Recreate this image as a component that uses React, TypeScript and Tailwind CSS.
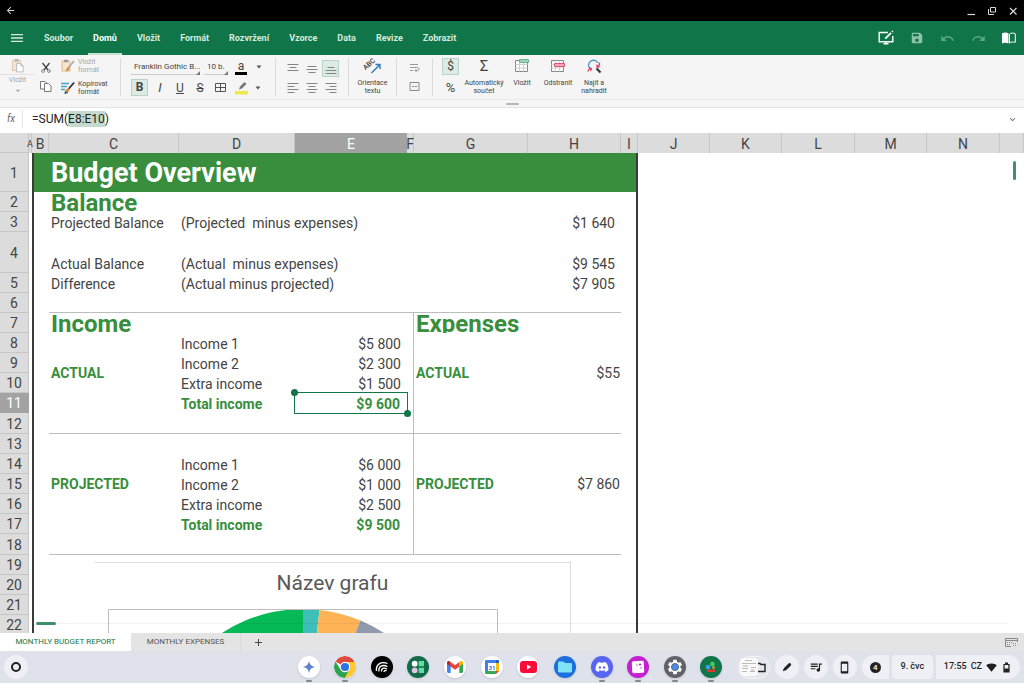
import { useEffect, useRef } from 'react'
import type { ReactNode } from 'react'
import { FaDiscord } from 'react-icons/fa'
import {
  MdArrowBack,
  MdArrowDropDown,
  MdBatteryFull,
  MdColorize,
  MdKeyboardArrowDown,
  MdMenu,
  MdQueueMusic,
  MdRedo,
  MdSave,
  MdSettings,
  MdSignalWifi4Bar,
  MdStayPrimaryPortrait,
  MdUndo,
} from 'react-icons/md'

const menu = ['Soubor', 'Domů', 'Vložit', 'Formát', 'Rozvržení', 'Vzorce', 'Data', 'Revize', 'Zobrazit']

const columns = [
  { name: 'A', col: 'w-[3px]' },
  { name: 'B', col: 'w-[17px]' },
  { name: 'C', col: 'w-[130px]' },
  { name: 'D', col: 'w-[116px]' },
  { name: 'E', col: 'w-[112px]' },
  { name: 'F', col: 'w-[7px]' },
  { name: 'G', col: 'w-[114px]' },
  { name: 'H', col: 'w-[93px]' },
  { name: 'I', col: 'w-[17px]' },
  { name: 'J', col: 'w-[72px]' },
  { name: 'K', col: 'w-[72px]' },
  { name: 'L', col: 'w-[73px]' },
  { name: 'M', col: 'w-[72px]' },
  { name: 'N', col: 'w-[73px]' },
  { name: '', col: '' },
]

function TitleBar() {
  return (
    <div className="flex h-[21px] shrink-0 items-center justify-between bg-black pr-[6px] pl-1 text-[#d8d8d8]">
      <button aria-label="Zpět" className="flex w-3 justify-center">
        <MdArrowBack size={11} />
      </button>
      <div className="flex items-center gap-[11px]">
        <button aria-label="Minimalizovat">
          <svg width="10" height="10" viewBox="0 0 10 10" stroke="currentColor" strokeWidth="1.2">
            <path d="M1.5 8.5h7.5" />
          </svg>
        </button>
        <button aria-label="Obnovit">
          <svg width="10" height="10" viewBox="0 0 10 10" fill="none" stroke="currentColor">
            <path d="M3.5 1.5h5v4.500h-5zM1.500 3v5.500h5.500" />
          </svg>
        </button>
        <button aria-label="Zavřít">
          <svg width="10" height="10" viewBox="0 0 10 10" stroke="currentColor" strokeWidth="1.2">
            <path d="M2 2l6.500 6.500M8.500 2L2 8.500" />
          </svg>
        </button>
      </div>
    </div>
  )
}

function MenuBar() {
  return (
    <header className="flex h-[34px] shrink-0 items-stretch bg-[#107549] text-[#d5eadf]">
      <button aria-label="Nabídka" className="flex w-[34px] items-center justify-center">
        <MdMenu size={16} />
      </button>
      <nav className="flex items-stretch pt-[2px]">
        {menu.map((item) => (
          <a
            key={item}
            href="#"
            className={
              item === 'Domů'
                ? 'mx-[5px] flex items-center border-b-2 border-[#c9e2d5] px-[5px] pt-[2px] text-[9px] font-bold text-white'
                : 'flex items-center px-[10px] text-[9px] font-bold'
            }
          >
            {item}
          </a>
        ))}
      </nav>
      <div className="ml-auto flex items-center gap-4 pr-2">
        <button aria-label="Režim úprav" className="text-white">
          <svg width="16" height="16" viewBox="0 0 16 16" fill="none" stroke="currentColor" strokeWidth="1.4">
            <path d="M10 2.500H1.200v9.200h13.600V6M5.500 13.800h5M8 12v2" />
            <path d="M7.300 8.700L13 2.800" strokeWidth="1.800" />
            <path d="M14 1.800l.8-.8" strokeWidth="1.800" />
          </svg>
        </button>
        <button aria-label="Uložit" className="text-[#8ec3a9]">
          <MdSave size={14} />
        </button>
        <button aria-label="Zpět" className="text-[#5ba582]">
          <MdUndo size={15} />
        </button>
        <button aria-label="Znovu" className="text-[#5ba582]">
          <MdRedo size={15} />
        </button>
        <button aria-label="Čtení" className="text-white">
          <svg width="14" height="14" viewBox="0 0 14 14">
            <path d="M0 2.500C2 1.200 5 1.300 6.500 2.600V12.600C5 11.400 2 11.300 0 12.400z" fill="currentColor" />
            <path d="M7.500 3c1.500-1.200 3.800-1.200 5.800-.3v8.600c-2-.6-4.300-.5-5.800.7z" fill="none" stroke="currentColor" />
          </svg>
        </button>
      </div>
    </header>
  )
}

function PasteIcon() {
  return (
    <svg width="14" height="16" viewBox="0 0 14 16" fill="none">
      <path d="M1 2.500h9v11H1z" fill="#f3e3cf" stroke="#dcc7ae" />
      <path d="M3.500 1h4v3h-4z" fill="#b5b5b5" />
      <path d="M5.500 6h4.500l2.500 2.500V15h-7z" fill="#fff" stroke="#b5b5b5" />
      <path d="M10 6v2.500h2.500" stroke="#b5b5b5" />
    </svg>
  )
}

function PasteFormatIcon() {
  return (
    <svg width="14" height="14" viewBox="0 0 14 14" fill="none">
      <path d="M1 2h8v10H1z" fill="#f6e4cd" stroke="#dfb98a" />
      <path d="M3 .7h4v2.600H3z" fill="#999" />
      <path d="M13 2L7.500 8.500" stroke="#aaa" strokeWidth="1.600" />
      <path d="M7.500 8c1.500.5 1.500 3.500-2.500 4.500 0-2 .5-4 2.500-4.500z" fill="#c88f54" />
    </svg>
  )
}

function CopyFormatIcon() {
  return (
    <svg width="14" height="14" viewBox="0 0 14 14" fill="none">
      <path d="M0 2.500h8M0 5.500h6M0 8.500h4" stroke="#4aa3c7" strokeWidth="1.400" />
      <path d="M13.200 1.500L7.500 8" stroke="#333" strokeWidth="1.800" />
      <path d="M7 7.300c2 .5 2.200 4-3.500 5.700.3-3 1-5.200 3.500-5.700z" fill="#e38b36" />
      <path d="M4 10.500c1.500 0 2.500.5 3 1.200-1 .8-2 1.100-3.500 1.300z" fill="#1d5f96" />
    </svg>
  )
}

function Lines({ d }: { d: string }) {
  return (
    <svg width="12" height="12" viewBox="0 0 12 12" stroke="#858585" fill="none">
      <path d={d} />
    </svg>
  )
}

function BorderIcon() {
  return (
    <svg width="11" height="11" viewBox="0 0 11 11" fill="none" stroke="#555">
      <path d="M.5 1.500h10v8H.5zM5.500 1.500v8M.5 5.500h10" />
    </svg>
  )
}

function Caret() {
  return (
    <svg width="6" height="12" viewBox="0 0 6 12">
      <path d="M.5 4.500h5L3 7.500z" fill="#555" />
    </svg>
  )
}

// small triangle in the lower right corner of the font pickers
function Corner() {
  return (
    <svg width="4" height="4" viewBox="0 0 4 4" className="pointer-events-none absolute right-0 bottom-0">
      <path d="M4 0v4H0z" fill="#777" />
    </svg>
  )
}

function TableIcon({ remove }: { remove?: boolean }) {
  return (
    <svg width="16" height="16" viewBox="0 0 16 16" fill="none">
      <path d="M1.500 2.500h12v11h-12z" fill="#fff" stroke="#858585" />
      <path d="M1.500 6.500h12M1.500 10h12M5.500 2.500v11M9.500 2.500v11" stroke="#d0d0d0" />
      {remove ? (
        <path d="M4.500 5.500h10v3h-10z" fill="#f7a8b8" stroke="#df5674" strokeLinejoin="round" />
      ) : (
        <path d="M5.500 1.500h9v3h-9z" fill="#9ad2b8" stroke="#6db794" strokeLinejoin="round" />
      )}
    </svg>
  )
}

function ToolButton({ label, icon, width }: { label: string; icon: ReactNode; width: string }) {
  return (
    <button className={`flex ${width} flex-col items-center gap-[5px] text-[7px] leading-2 text-[#444]`}>
      <span className="flex h-4 items-center">{icon}</span>
      <span className="text-center whitespace-pre-line">{label}</span>
    </button>
  )
}

function Ribbon() {
  return (
    <div className="shrink-0 bg-[#f5f5f5]">
      <div className="flex h-11 items-center text-[#444]">
        <div className="flex h-[38px] border-r border-[#dcdcdc] pr-3">
          <button className="flex w-[35px] flex-col items-center text-[7px] text-[#a5a5a5]">
            <PasteIcon />
            <span className="mt-px w-full border-t border-[#e2e2e2] leading-[10px]">Vložit</span>
            <MdArrowDropDown size={12} />
          </button>
          <div className="flex w-[22px] flex-col items-center justify-between py-1">
            <button aria-label="Vyjmout">
              <svg width="10" height="11" viewBox="0 0 10 11" fill="none" stroke="#444">
                <path d="M1.500 1l5.500 7M8.500 1L3 8" strokeWidth="1.300" />
                <circle cx="2" cy="9" r="1.400" stroke="#888" />
                <circle cx="8" cy="9" r="1.400" stroke="#888" />
              </svg>
            </button>
            <button aria-label="Kopírovat">
              <svg width="12" height="12" viewBox="0 0 12 12" fill="#fff" stroke="#777">
                <path d="M.5 1.500H5L7 3.500V9H.5z" />
                <path d="M4.500 3.500h4l2.500 2.500v5.500H4.500z" />
              </svg>
            </button>
          </div>
          <div className="flex flex-col justify-between pl-1">
            <button className="flex items-center gap-[3px] text-left text-[7px] leading-2 text-[#a5a5a5]">
              <PasteFormatIcon />
              <span>Vložit<br />formát</span>
            </button>
            <button className="flex items-center gap-[3px] text-left text-[7px] leading-2">
              <CopyFormatIcon />
              <span className="w-[30px]">Kopírovat<br />formát</span>
            </button>
          </div>
        </div>

        <div className="flex h-[38px] w-[155px] flex-col justify-between border-r border-[#dcdcdc] pl-[10px]">
          <div className="flex h-[17px] items-end">
            <div className="relative flex w-[69px]">
              <select
                aria-label="Písmo"
                className="h-4 w-full appearance-none border-b border-[#ccc] pl-[3px] text-[8px] outline-none"
              >
                <option>Franklin Gothic B...</option>
              </select>
              <Corner />
            </div>
            <div className="relative ml-1 flex w-6">
              <select
                aria-label="Velikost písma"
                className="h-4 w-full appearance-none border-b border-[#ccc] pl-[3px] text-[8px] outline-none"
              >
                <option>10 b.</option>
              </select>
              <Corner />
            </div>
            <button aria-label="Barva písma" className="ml-[7px] flex w-3 flex-col items-center">
              <span className="text-[12px] leading-3">a</span>
              <span className="h-[3px] w-3 bg-black" />
            </button>
            <button aria-label="Další barvy písma" className="mb-[2px] ml-[9px]">
              <Caret />
            </button>
          </div>
          <div className="flex items-center">
            <button
              aria-pressed="true"
              className="h-[17px] w-[17px] border border-[#b9d3c6] bg-[#dcebe4] text-[12px] leading-[15px] font-bold"
            >
              B
            </button>
            <button className="ml-[2px] w-5 text-[13px] leading-4 italic">I</button>
            <button className="w-5 text-[12px] leading-4 underline">U</button>
            <button className="w-5 text-[12px] leading-4 line-through">S</button>
            <button aria-label="Ohraničení" className="flex w-5 justify-center">
              <BorderIcon />
            </button>
            <button aria-label="Barva výplně" className="flex w-[22px] justify-center">
              <svg width="13" height="14" viewBox="0 0 13 14">
                <path d="M4 8.500l1-3L9.500 1l2 2L7 7.500z" fill="#777" />
                <path d="M0 10h13v3.500H0z" fill="#f0e94b" />
              </svg>
            </button>
            <button aria-label="Další barvy výplně" className="ml-[3px]">
              <Caret />
            </button>
          </div>
        </div>

        <div className="grid h-[38px] w-[73px] grid-cols-3 place-items-center border-r border-[#dcdcdc] px-2">
          <button aria-label="Nahoru"><Lines d="M.5 1.500h11M2.500 4.500h7M.5 7.500h11" /></button>
          <button aria-label="Na střed svisle"><Lines d="M1.500 3.500h9M.5 6.500h11M2.500 9.500h7" /></button>
          <button
            aria-label="Dolů"
            aria-pressed="true"
            className="flex h-[17px] w-[17px] items-center justify-center border border-[#b9d3c6] bg-[#dcebe4]"
          >
            <Lines d="M2.500 4.500h7M.5 7.500h11M.5 10.500h11" />
          </button>
          <button aria-label="Vlevo"><Lines d="M.5 1.500h11M.5 4.500h7M.5 7.500h11M.5 10.500h7" /></button>
          <button aria-label="Na střed"><Lines d="M.5 1.500h11M2.500 4.500h7M.5 7.500h11M2.500 10.500h7" /></button>
          <button aria-label="Vpravo"><Lines d="M.5 1.500h11M4.500 4.500h7M.5 7.500h11M4.500 10.500h7" /></button>
        </div>

        <div className="flex h-[38px] w-12 justify-center border-r border-[#dcdcdc]">
          <ToolButton
            width="w-12"
            label={'Orientace\ntextu'}
            icon={
              <svg width="20" height="18" viewBox="0 0 20 18" fill="none" className="overflow-visible">
                <text x="2" y="12" fontSize="7" fontWeight="500" fill="#333" transform="rotate(-42 4 12)">
                  ABC
                </text>
                <path d="M8.500 16l8-8M12.500 7.500h4.500V12" stroke="#2b7bb5" strokeWidth="1.400" />
              </svg>
            }
          />
        </div>

        <div className="flex h-[38px] w-9 flex-col items-center justify-around border-r border-[#dcdcdc]">
          <button aria-label="Zalamovat text">
            <svg width="11" height="11" viewBox="0 0 11 11" fill="none" stroke="#999">
              <path d="M1 2.500h8M1 5.500h7.500c2 0 2 3 0 3H6M1 8.500h3M7.500 7L6 8.500 7.500 10" />
            </svg>
          </button>
          <button aria-label="Sloučit buňky">
            <svg width="11" height="11" viewBox="0 0 11 11" fill="none" stroke="#8a8a8a">
              <path d="M1 1.500h9v8H1z" />
              <path d="M3 5.500h2M6 5.500h2" stroke="#4b9f86" />
            </svg>
          </button>
        </div>

        <div className="flex h-[38px] w-[31px] flex-col items-center justify-between pl-1">
          <button
            aria-pressed="true"
            className="h-[17px] w-[17px] border border-[#b9d3c6] bg-[#dcebe4] text-[12px] leading-[15px]"
          >
            $
          </button>
          <button className="text-[13px] leading-[17px]">%</button>
        </div>

        <div className="flex h-[38px]">
          <ToolButton width="w-10" label={'Automatický\nsoučet'} icon={<span className="text-[15px] leading-4">Σ</span>} />
          <ToolButton width="w-9" label="Vložit" icon={<TableIcon />} />
          <ToolButton width="w-9" label="Odstranit" icon={<TableIcon remove />} />
          <ToolButton
            width="w-9"
            label={'Najít a\nnahradit'}
            icon={
              <svg width="16" height="16" viewBox="0 0 16 16" fill="none">
                <path d="M10.500 10.500l4 4" stroke="#333" strokeWidth="2.200" />
                <path d="M4 10.800A5 5 0 1 1 12 5" stroke="#4b97c9" strokeWidth="1.300" />
                <path d="M13.500 4.500c.3 2-.5 3.500-2 4M11 6.500v2.500h2.500" stroke="#d9436b" strokeWidth="1.300" />
                <path d="M2 13.500c0-1.500 1.500-3 3-3M3 9.500l2.500 1L4.500 13" stroke="#d9436b" strokeWidth="1.300" />
              </svg>
            }
          />
        </div>
      </div>
      <div className="flex h-2 items-center justify-center border-t border-[#e9e9e9]">
        <span className="h-[2px] w-[13px] rounded bg-[#b5b5b5]" />
      </div>
    </div>
  )
}

function FormulaBar() {
  const input = useRef<HTMLInputElement>(null)

  // keep the referenced range highlighted in the formula
  useEffect(() => {
    input.current?.focus({ preventScroll: true })
    input.current?.setSelectionRange(5, 11)
  }, [])

  return (
    <div className="flex h-[26px] shrink-0 items-center border-t border-[#e4e4e4] bg-white pb-[3px]">
      <label
        htmlFor="formula"
        className="h-[18px] w-[23px] border-r border-[#e6e6e6] text-center text-[10px] leading-[18px] italic text-[#666]"
      >
        fx
      </label>
      <input
        id="formula"
        ref={input}
        defaultValue="=SUM(E8:E10)"
        className="min-w-0 flex-1 pl-[9px] text-[12px] leading-4 text-[#222] outline-none selection:bg-[#c3dacd] selection:text-[#222]"
      />
      <button aria-label="Rozbalit" className="pr-[6px] text-[#666]">
        <MdKeyboardArrowDown size={11} />
      </button>
    </div>
  )
}

type RowProps = {
  n: number
  height?: string
  banner?: boolean
  children: ReactNode
}

function Row({ n, height = 'h-5', banner, children }: RowProps) {
  const fill = banner ? 'bg-[#388e3c]' : ''
  return (
    <tr className={height}>
      <th
        scope="row"
        className={
          n === 11
            ? 'border-r border-b border-[#a3a3a3] bg-[#a3a3a3] pt-px font-normal text-white'
            : 'border-r border-b border-[#c6c6c6] bg-[#dcdcdc] pt-px font-normal text-[#444]'
        }
      >
        {n}
      </th>
      <td />
      <td className={`border-l-2 border-[#3a3a3a] ${fill}`} />
      {children}
      <td className={`border-r-2 border-[#3a3a3a] ${fill}`} />
      <td colSpan={6} />
    </tr>
  )
}

function Heading({ children }: { children: ReactNode }) {
  return (
    <h2 className="h-5 pt-px pl-[2px] text-[24px] leading-5 font-bold whitespace-nowrap text-[#388e3c]">
      {children}
    </h2>
  )
}

const label = 'pt-[2px] pl-[2px]'
const amount = 'pt-[2px] pr-[6px] text-right'
const side = 'pl-[2px] align-middle font-bold text-[#388e3c]'
const bar = <td className="border-r border-[#bdbdbd]" />

type BalanceProps = { n: number; height?: string; title: string; note: string; value: string }

function BalanceRow({ n, height, title, note, value }: BalanceProps) {
  return (
    <Row n={n} height={height}>
      <td className="pl-[2px] align-bottom whitespace-nowrap">{title}</td>
      <td colSpan={2} className="pl-[2px] align-bottom whitespace-pre">{note}</td>
      <td />
      <td />
      <td className="pr-[6px] text-right align-bottom">{value}</td>
    </Row>
  )
}

function RuledRow({ n, height, split }: { n: number; height?: string; split?: boolean }) {
  return (
    <Row n={n} height={height}>
      <td colSpan={3} className="border-b border-[#bdbdbd]" />
      <td className={split ? 'border-r border-b border-[#bdbdbd]' : 'border-b border-[#bdbdbd]'} />
      <td colSpan={2} className="border-b border-[#bdbdbd]" />
    </Row>
  )
}

function Chart() {
  return (
    <figure className="absolute top-[429px] left-[95px] h-[340px] w-[476px] border-t border-r border-[#dcdcdc] bg-white">
      <figcaption className="pt-2 text-center text-[21px] leading-6 text-[#595959]">Název grafu</figcaption>
      <svg className="mt-[14px] ml-[13px]" width="390" height="292" viewBox="0 0 390 292" fill="none">
        <path d="M195 149V0A149 149 0 0 0 46 149z" fill="#06b957" />
        <path d="M195 149V0A149 149 0 0 1 211.500 1z" fill="#3fbfb9" />
        <path d="M195 149L211.500 1A149 149 0 0 1 252.500 11.600z" fill="#feb357" />
        <path d="M195 149L252.500 11.600A149 149 0 0 1 344 149z" fill="#9199ab" />
        <path d="M.5 292V.5h389V292" stroke="#bdbdbd" />
      </svg>
    </figure>
  )
}

function Sheet() {
  return (
    <main className="relative min-h-0 flex-1 overflow-hidden bg-white">
      <table className="w-full table-fixed border-separate border-spacing-0 text-[14px] leading-[18px] text-[#444]">
        <colgroup>
          <col className="w-[29px]" />
          {columns.map((c, i) => (
            <col key={i} className={c.col} />
          ))}
        </colgroup>
        <thead>
          <tr className="h-5">
            <th className="border-r border-b border-[#c6c6c6] bg-[#dcdcdc]" />
            {columns.map((c, i) => (
              <th
                key={i}
                scope="col"
                className={
                  c.name === 'E'
                    ? 'bg-[#a3a3a3] pt-px font-normal text-white'
                    : 'border-r border-[#c6c6c6] bg-[#dcdcdc] pt-px font-normal'
                }
              >
                <span className={c.name === 'A' ? 'flex justify-center text-[9px]' : 'flex justify-center'}>{c.name}</span>
              </th>
            ))}
          </tr>
        </thead>
        <tbody>
          <Row n={1} height="h-[39px]" banner>
            <td colSpan={6} className="bg-[#388e3c] pl-[2px]">
              <h1 className="text-[27px] leading-8 font-bold text-white">Budget Overview</h1>
            </td>
          </Row>
          <Row n={2}>
            <td colSpan={6}><Heading>Balance</Heading></td>
          </Row>
          <BalanceRow n={3} title="Projected Balance" note="(Projected  minus expenses)" value="$1 640" />
          <BalanceRow n={4} height="h-[41px]" title="Actual Balance" note="(Actual  minus expenses)" value="$9 545" />
          <BalanceRow n={5} title="Difference" note="(Actual minus projected)" value="$7 905" />
          <RuledRow n={6} />
          <Row n={7}>
            <td colSpan={3}><Heading>Income</Heading></td>
            {bar}
            <td colSpan={2}>
              <div className="overflow-hidden"><Heading>Expenses</Heading></div>
            </td>
          </Row>
          <Row n={8}>
            <td rowSpan={4} className={side}>ACTUAL</td>
            <td className={label}>Income 1</td>
            <td className={amount}>$5 800</td>
            {bar}
            <td rowSpan={4} className={side}>ACTUAL</td>
            <td rowSpan={4} className="pr-px text-right align-middle">$55</td>
          </Row>
          <Row n={9}>
            <td className={label}>Income 2</td>
            <td className={amount}>$2 300</td>
            {bar}
          </Row>
          <Row n={10}>
            <td className={label}>Extra income</td>
            <td className={amount}>$1 500</td>
            {bar}
          </Row>
          <Row n={11}>
            <td className={`${label} font-bold text-[#388e3c]`}>Total income</td>
            <td className="relative pt-[2px] pr-[7px] text-right font-bold text-[#388e3c]">
              $9 600
              <span className="absolute -inset-px border border-[#107549]">
                <span className="absolute -top-1 -left-1 size-[7px] rounded-full bg-[#107549]" />
                <span className="absolute -right-1 -bottom-1 size-[7px] rounded-full bg-[#107549]" />
              </span>
            </td>
            {bar}
          </Row>
          <RuledRow n={12} height="h-[21px]" split />
          <Row n={13}>
            <td colSpan={3} />
            {bar}
            <td colSpan={2} />
          </Row>
          <Row n={14}>
            <td rowSpan={3} className={side}>PROJECTED</td>
            <td className={label}>Income 1</td>
            <td className={amount}>$6 000</td>
            {bar}
            <td rowSpan={3} className={side}>PROJECTED</td>
            <td rowSpan={3} className="pr-px text-right align-middle">$7 860</td>
          </Row>
          <Row n={15}>
            <td className={label}>Income 2</td>
            <td className={amount}>$1 000</td>
            {bar}
          </Row>
          <Row n={16}>
            <td className={label}>Extra income</td>
            <td className={amount}>$2 500</td>
            {bar}
          </Row>
          <Row n={17}>
            <td />
            <td className={`${label} font-bold text-[#388e3c]`}>Total income</td>
            <td className="pt-[2px] pr-[7px] text-right font-bold text-[#388e3c]">$9 500</td>
            {bar}
            <td colSpan={2} />
          </Row>
          <RuledRow n={18} height="h-[21px]" split />
          {[19, 20, 21, 22].map((n) => (
            <Row key={n} n={n}>
              <td colSpan={6} />
            </Row>
          ))}
        </tbody>
      </table>
      <Chart />
      <div className="absolute right-4 bottom-2 left-9 flex h-[3px] items-center">
        <span className="h-[3px] w-5 rounded bg-[#3f8e6c]" />
        <span className="h-px flex-1 bg-black/5" />
      </div>
      <div className="absolute top-7 right-2 h-[19px] w-[3px] rounded bg-[#3f8e6c]" />
    </main>
  )
}

function SheetTabs() {
  return (
    <div className="flex h-[18px] shrink-0 items-stretch bg-[#e4e4e4] text-[8px] text-[#555]">
      <button className="w-[131px] bg-white text-[#107549]">MONTHLY BUDGET REPORT</button>
      <button className="w-[110px] border-r border-[#dadada]">MONTHLY EXPENSES</button>
      <button aria-label="Přidat list" className="flex w-[35px] items-center justify-center">
        <svg width="9" height="9" viewBox="0 0 9 9" stroke="#444">
          <path d="M4.500 1v7M1 4.500h7" />
        </svg>
      </button>
      <button aria-label="Klávesnice" className="ml-auto pr-[6px]">
        <svg width="13" height="10" viewBox="0 0 13 10" fill="none" stroke="#888">
          <path d="M6 9.500H.5V1.500h12V5M.5 3.500h12" />
          <path d="M2 5.500h5M2 7.500h4M8 6.500h4M8 8.500h4" strokeDasharray="1 1" />
        </svg>
      </button>
    </div>
  )
}

const apps = [
  {
    name: 'Gemini',
    face: 'bg-white',
    open: true,
    icon: (
      <svg width="14" height="14" viewBox="0 0 14 14">
        <defs>
          <linearGradient id="spark" x1="0" y1="0" x2="1" y2="1">
            <stop offset="0" stopColor="#7b6fc0" />
            <stop offset="1" stopColor="#3d94dc" />
          </linearGradient>
        </defs>
        <path d="M7 1c.6 3.600 2.400 5.400 6 6-3.600.6-5.400 2.400-6 6-.6-3.600-2.400-5.400-6-6 3.600-.6 5.400-2.400 6-6z" fill="url(#spark)" />
      </svg>
    ),
  },
  {
    name: 'Chrome',
    face: 'bg-white',
    open: true,
    icon: (
      <svg width="22" height="22" viewBox="0 0 22 22">
        <path d="M11 11L1.470 5.500A11 11 0 0 1 20.530 5.500z" fill="#e04a3c" />
        <path d="M11 11V6h9.800A11 11 0 0 1 10.500 22z" fill="#fbc832" />
        <path d="M1.470 5.500A11 11 0 0 0 10.700 22L15.300 13.500 6.600 13.500z" fill="#2ea24f" />
        <circle cx="11" cy="11" r="5.200" fill="#fff" />
        <circle cx="11" cy="11" r="4.100" fill="#2b74e2" />
      </svg>
    ),
  },
  {
    name: 'Nearby',
    face: 'bg-black',
    icon: (
      <svg width="16" height="16" viewBox="0 0 16 16" fill="none" stroke="#fff" strokeWidth="1.300">
        <path d="M2.500 12C1.500 5.500 7 2 13.500 4.500M5 12.500C4 7.500 8.500 5 13.500 7.500M7.500 12.500C7 9.500 10 8 13 10M10 13c0-1.500 1.500-2 2.500-1" />
      </svg>
    ),
  },
  {
    name: 'Widgets',
    face: 'bg-[#136b4b]',
    icon: (
      <svg width="14" height="14" viewBox="0 0 14 14">
        <circle cx="3.700" cy="3.700" r="2.900" fill="#fff" />
        <path d="M7.700 1h5.300v5.300H7.700z" fill="#5fe0a0" />
        <circle cx="3.700" cy="10.300" r="2.900" fill="#e6c3e3" />
        <path d="M7.700 7.700h5.300V13H7.700z" fill="#5fe0a0" />
      </svg>
    ),
  },
  {
    name: 'Gmail',
    face: 'bg-white',
    icon: (
      <svg width="16" height="12" viewBox="0 0 16 12">
        <path d="M0 1.500L3.700 4.300V12H1.200C.5 12 0 11.500 0 10.800z" fill="#4283f1" />
        <path d="M16 1.500l-3.700 2.800V12h2.500c.7 0 1.200-.5 1.200-1.200z" fill="#34a553" />
        <path d="M3.700 1L8 4.200 12.300 1v4.600L8 8.800 3.700 5.600z" fill="#ea4435" />
        <path d="M0 1.500C0 .2 1.500-.5 2.600.2l1.100.8v4.600L0 2.800z" fill="#c5221f" />
        <path d="M16 1.500c0-1.300-1.500-2-2.600-1.300l-1.100.8v4.600L16 2.800z" fill="#fabb05" />
      </svg>
    ),
  },
  {
    name: 'Kalendář',
    face: 'bg-white',
    icon: (
      <svg width="14" height="14" viewBox="0 0 14 14">
        <path d="M1 0h10v3H3v8H0V1a1 1 0 0 1 1-1z" fill="#3f7fe8" />
        <path d="M11 0h2a1 1 0 0 1 1 1v2h-3z" fill="#1a5cc8" />
        <path d="M11 3h3v8h-3z" fill="#fbbc05" />
        <path d="M0 11h11v3H1a1 1 0 0 1-1-1z" fill="#34a853" />
        <path d="M11 11h3l-3 3z" fill="#ea4335" />
        <path d="M3 3h8v8H3z" fill="#fff" />
        <text x="7" y="9.500" textAnchor="middle" fontSize="6" fontWeight="700" fill="#2f6fd8">31</text>
      </svg>
    ),
  },
  {
    name: 'YouTube',
    face: 'bg-white',
    icon: (
      <svg width="17" height="12" viewBox="0 0 17 12">
        <rect width="17" height="12" rx="3" fill="#fb0b3a" />
        <path d="M7 3.500v5L11.200 6z" fill="#fff" />
      </svg>
    ),
  },
  {
    name: 'Soubory',
    face: 'bg-[#1d6fe0]',
    icon: (
      <svg width="14" height="12" viewBox="0 0 14 12">
        <path d="M1.200.5H5.500L7 2h5.800c.6 0 1.200.5 1.200 1.200v7.100c0 .7-.6 1.200-1.200 1.200H1.200C.5 11.500 0 11 0 10.300V1.700C0 1 .5.500 1.200.500z" fill="#7fe3f8" />
      </svg>
    ),
  },
  { name: 'Discord', face: 'bg-[#5865f2]', open: true, icon: <FaDiscord size={14} color="#fff" /> },
  {
    name: 'Galerie',
    face: 'bg-[#c41fd0]',
    open: true,
    icon: (
      <svg width="14" height="14" viewBox="0 0 14 14">
        <rect x="1" y="1" width="12" height="12" rx="1.500" fill="#fff" transform="rotate(-3 7 7)" />
        <circle cx="9" cy="4.500" r="1.100" fill="#c41fd0" />
        <circle cx="6" cy="5" r=".7" fill="#c41fd0" />
        <circle cx="10" cy="8" r=".7" fill="#c41fd0" />
      </svg>
    ),
  },
  {
    name: 'Nastavení',
    face: 'bg-[#5f6368]',
    open: true,
    icon: (
      <span className="relative flex">
        <MdSettings size={18} color="#fff" />
        <span className="absolute inset-[5px] rounded-full border border-[#5f6368] bg-[#4a8cf0]" />
      </span>
    ),
  },
  {
    name: 'OfficeSuite',
    face: 'bg-[#107549]',
    open: true,
    icon: (
      <svg width="12" height="12" viewBox="0 0 12 12">
        <circle cx="7.500" cy="3" r="2.300" fill="#3fd35b" />
        <circle cx="3" cy="6" r="2.300" fill="#3f9df0" />
        <circle cx="8.500" cy="6.500" r="1.300" fill="#e8a23a" />
        <path d="M1.500 8.500h8.500V11H2.500z" fill="#e0392f" />
      </svg>
    ),
  },
]

function Shelf() {
  return (
    <footer className="grid h-8 shrink-0 grid-cols-[1fr_auto_1fr] items-center bg-[#dfe2eb] pr-1 text-[#1f1f1f]">
      <button aria-label="Spouštěč" className="ml-1 flex size-6 items-center justify-center rounded-full bg-[#eef0f5]">
        <span className="size-[10px] rounded-full border-2 border-[#222]" />
      </button>
      <div className="flex w-[425px] justify-between">
        {apps.map((app) => (
          <button key={app.name} aria-label={app.name} className="flex flex-col items-center gap-[2px] pt-[3px]">
            <span className={`flex size-[22px] items-center justify-center overflow-hidden rounded-full shadow-sm ${app.face}`}>
              {app.icon}
            </span>
            <span className={app.open ? 'h-[2px] w-[6px] rounded bg-[#85888f]' : 'h-[2px] w-[6px]'} />
          </button>
        ))}
      </div>
      <div className="flex items-center justify-end gap-[3px] text-[9px] font-medium">
        <button aria-label="Snímky" className="mr-[2px] flex h-[23px] w-8 items-center rounded-full border border-[#f0f2f7] bg-[#e4e7ee]">
          <svg width="30" height="20" viewBox="0 0 30 20" fill="none">
            <rect x="1" y="1" width="18" height="18" rx="4" fill="#fafafa" />
            <path d="M6 3.500h7M3 6.500h14M3 11.500h6M12 10.500h5M3 14.500h5M11 14.500h5" stroke="#bbb" />
            <path d="M4 9h5M12 13h3" stroke="#c9a3a3" />
            <path d="M19 6.500h2l1 1h4v7h-7" stroke="#222" strokeWidth="1.400" />
          </svg>
        </button>
        <button aria-label="Pero" className="mr-[2px] flex size-6 items-center justify-center rounded-full bg-[#eef0f5]">
          <svg width="10" height="10" viewBox="0 0 10 10" fill="#222">
            <path d="M.8 9.200l1-3L6.500 1.500a1.500 1.500 0 0 1 2.200 2.200L4 8.200z" />
          </svg>
        </button>
        <button aria-label="Média" className="mr-[2px] flex size-6 items-center justify-center rounded-full bg-[#eef0f5]">
          <MdQueueMusic size={14} />
        </button>
        <button aria-label="Telefon" className="mr-[2px] flex size-6 items-center justify-center rounded-full bg-[#eef0f5]">
          <MdStayPrimaryPortrait size={13} />
        </button>
        <button className="flex h-6 w-[27px] items-center justify-center rounded-l-full rounded-r-sm bg-[#eef0f5]">
          <span className="size-[11px] rounded-full bg-[#222] text-center text-[8px] leading-[11px] text-white">4</span>
        </button>
        <button className="h-6 w-[41px] rounded-sm bg-[#eef0f5]">9. čvc</button>
        <button className="flex h-6 items-center gap-1 rounded-l-sm rounded-r-full bg-[#eef0f5] px-2">
          <span>17:55</span>
          <span>CZ</span>
          <MdSignalWifi4Bar size={11} />
          <svg width="11" height="11" viewBox="0 0 11 11">
            <path d="M4 .5h3v1.500H4z" fill="#222" />
            <path d="M3 2.500h5v7.500H3z" fill="none" stroke="#222" strokeWidth="1.200" />
            <path d="M3 6.500h5V10H3z" fill="#222" />
          </svg>
        </button>
      </div>
    </footer>
  )
}

export default function App() {
  return (
    <div className="flex h-screen flex-col overflow-hidden bg-white font-[Roboto,sans-serif]">
      <TitleBar />
      <MenuBar />
      <Ribbon />
      <FormulaBar />
      <Sheet />
      <SheetTabs />
      <Shelf />
    </div>
  )
}
